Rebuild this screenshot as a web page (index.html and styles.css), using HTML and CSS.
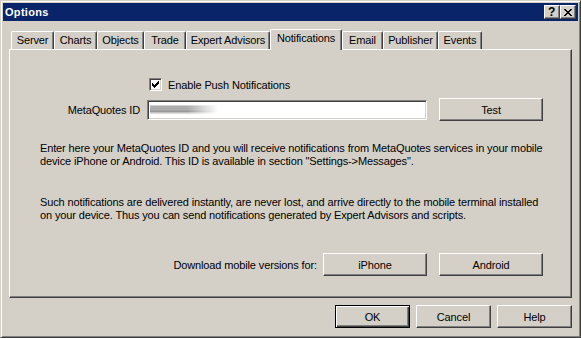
FILE: index.html
```html
<!DOCTYPE html>
<html>
<head>
<meta charset="utf-8">
<title>Options</title>
<link rel="stylesheet" href="styles.css">
</head>
<body>
<div class="window">
  <div class="titlebar">
    <span class="title">Options</span>
    <div class="caption-btns">
      <div class="cap cap-help">?</div>
      <div class="cap cap-close">
        <svg width="8" height="7" viewBox="0 0 8 7" shape-rendering="crispEdges">
          <path d="M0 0h2v1h-2zM6 0h2v1h-2zM1 1h2v1h-2zM5 1h2v1h-2zM2 2h4v1h-4zM3 3h2v1h-2zM2 4h4v1h-4zM1 5h2v1h-2zM5 5h2v1h-2zM0 6h2v1h-2zM6 6h2v1h-2z" fill="#000"/>
        </svg>
      </div>
    </div>
  </div>
  <div class="body">
    <div class="tabs">
      <div class="tab w-server">Server</div>
      <div class="tab w-charts">Charts</div>
      <div class="tab w-objects">Objects</div>
      <div class="tab w-trade">Trade</div>
      <div class="tab w-ea">Expert Advisors</div>
      <div class="tab tab-active w-notif">Notifications</div>
      <div class="tab w-email">Email</div>
      <div class="tab w-pub">Publisher</div>
      <div class="tab w-events">Events</div>
    </div>
    <div class="panel">
      <div class="check-row">
        <span class="checkbox">
          <svg width="7" height="7" viewBox="0 0 7 7" shape-rendering="crispEdges">
            <path d="M6 0h1v3h-1zM5 1h1v3h-1zM4 2h1v3h-1zM3 3h1v3h-1zM2 4h1v3h-1zM1 3h1v3h-1zM0 2h1v3h-1z" fill="#000"/>
          </svg>
        </span>
        <span class="check-label">Enable Push Notifications</span>
      </div>
      <div class="id-row">
        <span class="id-label">MetaQuotes ID</span>
        <div class="input"><span class="blurred"></span></div>
        <div class="btn btn-wide">Test</div>
      </div>
      <p class="para para-1">Enter here your MetaQuotes ID and you will receive notifications from MetaQuotes services in your mobile<br>device iPhone or Android. This ID is available in section "Settings-&gt;Messages".</p>
      <p class="para para-2">Such notifications are delivered instantly, are never lost, and arrive directly to the mobile terminal installed<br>on your device. Thus you can send notifications generated by Expert Advisors and scripts.</p>
      <div class="download-row">
        <span class="download-label">Download mobile versions for:</span>
        <div class="btn btn-wide">iPhone</div>
        <div class="btn btn-wide">Android</div>
      </div>
    </div>
    <div class="actions">
      <div class="btn btn-default">OK</div>
      <div class="btn">Cancel</div>
      <div class="btn">Help</div>
    </div>
  </div>
</div>
</body>
</html>
```
FILE: styles.css
```css
html, body {
  margin: 0;
  padding: 0;
  background: #D4D0C8;
}

body {
  font-family: "Liberation Sans", Arial, sans-serif;
  font-size: 11px;
  letter-spacing: -0.13px;
  color: #000;
}

.window {
  width: 581px;
  height: 338px;
  box-sizing: border-box;
  border: 1px solid;
  border-color: #D4D0C8 #404040 #404040 #D4D0C8;
  box-shadow: inset 1px 1px #fff, inset -1px -1px #808080;
  padding: 2px;
  background: #D4D0C8;
}

.titlebar {
  height: 18px;
  background: #0A246A;
  display: flex;
  align-items: center;
  justify-content: space-between;
  padding: 0 2px 0 2px;
}

.title {
  color: #fff;
  font-weight: bold;
  font-size: 11px;
  letter-spacing: 0.3px;
}

.caption-btns {
  display: flex;
}

.cap {
  width: 16px;
  height: 14px;
  box-sizing: border-box;
  background: #D4D0C8;
  border: 1px solid;
  border-color: #fff #404040 #404040 #fff;
  box-shadow: inset -1px -1px #808080;
  display: flex;
  align-items: center;
  justify-content: center;
}

.cap-help {
  font-weight: bold;
  font-size: 12px;
  line-height: 12px;
  padding-right: 1px;
}

.cap-close svg {
  display: block;
  margin-right: 1px;
}

.body {
  padding: 8px 6px 0;
}

.tabs {
  display: flex;
  align-items: flex-end;
  height: 20px;
  padding-left: 2px;
}

.tab {
  height: 18px;
  box-sizing: border-box;
  border-top: 1px solid #fff;
  border-left: 1px solid #fff;
  border-right: 1px solid #404040;
  box-shadow: inset -1px 0 #808080;
  border-radius: 2px 2px 0 0;
  text-align: center;
  line-height: 16px;
  white-space: nowrap;
}

.tab-active {
  height: 21px;
  margin-bottom: -1px;
  position: relative;
  z-index: 1;
  background: #D4D0C8;
  line-height: 17px;
}

.w-server { width: 43px; }
.w-charts { width: 43px; }
.w-objects { width: 47px; }
.w-trade { width: 42px; }
.w-ea { width: 84px; }
.w-notif { width: 72px; }
.w-email { width: 41px; }
.w-pub { width: 55px; }
.w-events { width: 44px; }

.panel {
  height: 249px;
  box-sizing: border-box;
  border: 1px solid;
  border-color: #fff #404040 #404040 #fff;
  box-shadow: inset -1px -1px #808080;
  padding: 28px 0 0 30px;
}

.check-row {
  display: flex;
  align-items: center;
  height: 13px;
  margin-left: 109px;
}

.checkbox {
  width: 13px;
  height: 13px;
  box-sizing: border-box;
  border: 1px solid;
  border-color: #808080 #fff #fff #808080;
  box-shadow: inset 1px 1px #404040, inset -1px -1px #D4D0C8;
  background: #fff;
  display: flex;
  align-items: center;
  justify-content: center;
}

.checkbox svg {
  display: block;
}

.check-label {
  margin-left: 6px;
}

.id-row {
  display: flex;
  align-items: center;
  margin-top: 7px;
  height: 23px;
}

.id-label {
  width: 100px;
  text-align: right;
  margin-right: 7px;
}

.input {
  width: 280px;
  height: 20px;
  box-sizing: border-box;
  border: 1px solid;
  border-color: #808080 #fff #fff #808080;
  box-shadow: inset 1px 1px #404040, inset -1px -1px #D4D0C8;
  background: #fff;
  margin-right: 12px;
  display: flex;
  align-items: center;
  padding-left: 2px;
}

.blurred {
  display: block;
  width: 68px;
  height: 9px;
  background: linear-gradient(to bottom,
    #e4e4e4 0, #9a9a9a 2px, #c8c8c8 3px, #8c8c8c 4px, #d0d0d0 5px, #7a7a7a 6px, #b8b8b8 7px, #e6e6e6 9px);
  -webkit-mask-image: linear-gradient(to right, #000 0%, #000 55%, transparent 100%);
  mask-image: linear-gradient(to right, #000 0%, #000 55%, transparent 100%);
  filter: blur(0.4px);
}

.btn {
  width: 75px;
  height: 23px;
  box-sizing: border-box;
  background: #D4D0C8;
  border: 1px solid;
  border-color: #fff #404040 #404040 #fff;
  box-shadow: inset -1px -1px #808080;
  display: flex;
  align-items: center;
  justify-content: center;
}

.btn-wide {
  width: 104px;
}

.btn-default {
  border: 1px solid #000;
  box-shadow: inset 1px 1px #fff, inset -1px -1px #404040, inset -2px -2px #808080;
}

.para {
  margin: 0;
  line-height: 13px;
  white-space: nowrap;
}

.para-1 {
  margin-top: 21px;
}

.para-2 {
  margin-top: 28px;
}

.download-row {
  display: flex;
  align-items: center;
  margin-top: 31px;
  width: 503px;
  justify-content: flex-end;
}

.download-label {
  margin-right: 6px;
}

.download-row .btn + .btn {
  margin-left: 12px;
}

.actions {
  display: flex;
  justify-content: flex-end;
  gap: 6px;
  margin-top: 7px;
}
```
